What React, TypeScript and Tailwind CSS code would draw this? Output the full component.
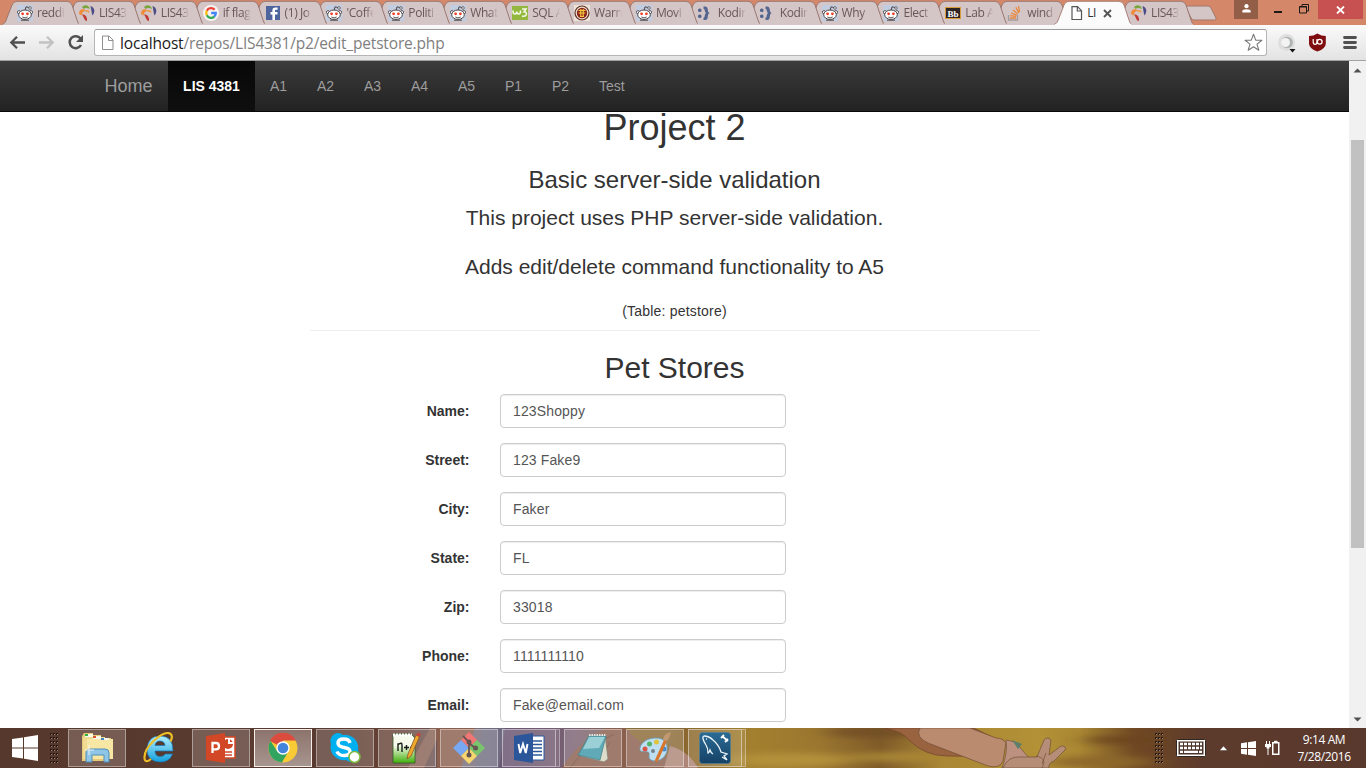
import React from "react";

type IconName =
  | "reddit" | "lis" | "google" | "facebook" | "w3" | "warn" | "koding" | "bb" | "so" | "doc";

const tabs: { icon: IconName; text: string; active?: boolean }[] = [
  { icon: "reddit", text: "reddi" },
  { icon: "lis", text: "LIS43" },
  { icon: "lis", text: "LIS43" },
  { icon: "google", text: "if flag" },
  { icon: "facebook", text: "(1) Jo" },
  { icon: "reddit", text: "'Coffe" },
  { icon: "reddit", text: "Politi" },
  { icon: "reddit", text: "What" },
  { icon: "w3", text: "SQL A" },
  { icon: "warn", text: "Warn" },
  { icon: "reddit", text: "Movi" },
  { icon: "koding", text: "Kodin" },
  { icon: "koding", text: "Kodin" },
  { icon: "reddit", text: "Why" },
  { icon: "reddit", text: "Elect" },
  { icon: "bb", text: "Lab A" },
  { icon: "so", text: "wind" },
  { icon: "doc", text: "LI", active: true },
  { icon: "lis", text: "LIS43" },
];

function Favicon({ name }: { name: IconName }) {
  const art: Record<IconName, React.ReactNode> = {
    reddit: (
      <>
        <rect width="16" height="16" fill="#c3cde2" />
        <path d="M8 6 9 1.8l3.4.8" fill="none" stroke="#4d4646" strokeWidth="1" />
        <circle cx="13" cy="3" r="1.3" fill="#fff" stroke="#4d4646" strokeWidth=".8" />
        <circle cx="2" cy="7.2" r="1.6" fill="#fff" stroke="#4d4646" strokeWidth=".9" />
        <circle cx="14" cy="7.2" r="1.6" fill="#fff" stroke="#4d4646" strokeWidth=".9" />
        <ellipse cx="8" cy="9.7" rx="6.3" ry="4.7" fill="#fff" stroke="#4d4646" strokeWidth="1" />
        <circle cx="5.6" cy="8.8" r="1.4" fill="#f03c24" />
        <circle cx="10.4" cy="8.8" r="1.4" fill="#f03c24" />
        <path d="M5.3 12q2.7 1.7 5.4 0" fill="none" stroke="#4d4646" strokeWidth=".9" />
        <path d="M4 15.2h8" stroke="#4d4646" />
      </>
    ),
    lis: (
      <>
        <path d="M0 9C0 4.500 3 3 7 5.500 4 6 3 8 2.500 10.500Z" fill="#f08b3a" />
        <path d="M3 2C6-.8 10 0 11 4 8 2.500 6 3 4.500 4Z" fill="#7aa63f" />
        <path d="M11.500 1C15 2 17 6 13.500 10.500 12.500 8 12.500 5 11.500 1Z" fill="#4a4c86" />
        <path d="M3 9.500C6 9 8.500 11.500 8 16 5 15.500 5 12 3 9.500Z" fill="#c23b34" />
        <path d="M7 5C10 4.500 11 6 10 8 9 7 8 6.500 6 7Z" fill="#ef9d4c" />
      </>
    ),
    google: (
      <>
        <circle cx="8" cy="8" r="8" fill="#f7f2f2" />
        <g fill="none" strokeWidth="2.3">
          <path d="M11.600 4.700A4.800 4.800 0 0 0 3.800 5.700" stroke="#ea4335" />
          <path d="M3.800 5.700a4.800 4.800 0 0 0 0 4.600" stroke="#fbbc05" />
          <path d="M3.800 10.300a4.800 4.800 0 0 0 7.500 1.300" stroke="#34a853" />
          <path d="M11.300 11.600A4.800 4.800 0 0 0 12.800 8H8.200" stroke="#4285f4" />
        </g>
      </>
    ),
    facebook: (
      <>
        <rect x="1" y="1" width="14" height="14" fill="#4d649c" />
        <path d="M10 15V9.500h2.500V7H10V5.500Q10 4.700 11 4.700h1.600V2.400h-2.200Q7.400 2.400 7.400 5.200V7H5.500v2.500h1.900V15Z" fill="#fff" />
      </>
    ),
    w3: (
      <>
        <rect y="1" width="16" height="14" fill="#94b83e" />
        <path d="M1 5.500q0 3.500 1.900 3.500t1.900-2.500q0 2.500 1.900 2.500t1.900-3.500M10 4h4L12 6.800q2.800 0 2.300 2.700-1 2.500-4.300 1.500" fill="none" stroke="#f4f8e6" strokeWidth="1.600" />
      </>
    ),
    warn: (
      <>
        <rect width="16" height="16" fill="#eee3da" />
        <circle cx="8" cy="8" r="7" fill="#f0e2c8" stroke="#5c3029" strokeWidth="1.200" />
        <circle cx="8" cy="8" r="5.200" fill="#8b1f1c" />
        <path d="M4.500 5.500h7M4.500 8h7M6.800 4v7.500M9.200 4v7.500M6 11.500h4" stroke="#f2cb3d" strokeWidth="1.200" />
      </>
    ),
    koding: (
      <g fill="#54658f">
        <rect x="0" y="3.500" width="3.500" height="3.500" rx="1.500" />
        <rect x="0" y="9.500" width="3.500" height="3.500" rx="1.500" />
        <path d="M5.500 1.500H7q2.800 0 2.800 3.500 0 2.500 1.700 3-1.700.7-1.700 3.500 0 3.500-2.800 3.500H5.500v-2.300q1.200 0 1.200-1.800Q6.700 9 8 8 6.700 7 6.700 5.300q0-1.500-1.200-1.500Z" />
      </g>
    ),
    bb: (
      <>
        <rect x=".5" y="2.500" width="15" height="11" fill="#2e2424" stroke="#d89b3a" />
        <text x="8" y="11.500" textAnchor="middle" fill="#fff" fontFamily="Liberation Serif, serif" fontWeight="700" fontSize="9">Bb</text>
      </>
    ),
    so: (
      <>
        <path d="M1.500 10v5h9v-5" fill="none" stroke="#a39c9c" strokeWidth="1.300" />
        <path d="M3 13h6M3.200 10.700l6 .7M4 8l5.700 2.200M6 5l4.800 4M8.800 2.400l3.200 5.400M11.500 1l1 6" stroke="#e8883d" strokeWidth="1.300" />
      </>
    ),
    doc: (
      <path d="M3 1.700h5.500l4 4V14.500H3ZM8.300 2v4h4" fill="#fff" stroke="#55565a" strokeWidth="1.200" />
    ),
  };
  return <svg className="relative h-4 w-4 shrink-0" viewBox="0 0 16 16">{art[name]}</svg>;
}

function BrowserTab({ icon, text, active, order }: { icon: IconName; text: string; active?: boolean; order: number }) {
  return (
    <div className="relative flex h-[25px] w-[61.900px] shrink-0 items-start pt-[5px] pl-[15px]" style={{ zIndex: order }}>
      <svg className="absolute top-0 left-0 h-[25px] w-[77px]" viewBox="0 0 77 25">
        <path
          d="M-2 24.500C2 24.500 3 23 4.200 20L10 5Q11.500 1.300 15 1.300H65Q68.500 1.300 70 5L75 20Q76 24 78 24.500V26H-2Z"
          fill={active ? "#fbfbfb" : "#d4c5c6"}
          stroke={active ? "#a98379" : "#9a7871"}
        />
        {active ? <path d="M1 24h75v2H1Z" fill="#fbfbfb" /> : null}
      </svg>
      <Favicon name={icon} />
      <span
        className={
          active
            ? "relative ml-[2px] w-[9px] text-xs leading-4 tracking-[-0.500px] whitespace-nowrap text-[#343434]"
            : "relative ml-1 w-[28px] shrink-0 overflow-hidden mask-r-from-70% text-xs leading-4 tracking-[-0.400px] whitespace-nowrap text-[#6a5857]"
        }
      >
        {text}
      </span>
      {active ? (
        <svg className="relative mt-1 ml-[7px] h-[9px] w-[9px] shrink-0" viewBox="0 0 9 9">
          <path d="m1 1 7 7M8 1 1 8" stroke="#555" strokeWidth="1.900" />
        </svg>
      ) : null}
    </div>
  );
}

function TabStrip() {
  return (
    <div className="flex h-[25px] bg-[#d58769]">
      <div className="relative isolate flex w-[1184px] shrink-0 pl-[2px]">
        {tabs.map((t, i) => (
          <BrowserTab key={i} {...t} order={t.active ? 50 : 30 - i} />
        ))}
      </div>
      <svg className="h-[25px] w-[50px] shrink-0" viewBox="0 0 50 25">
        <path d="M3 6H24Q26 6 27 8l5 10q.8 2-1.500 2H10Q8 20 7 18L2.200 8Q1.500 6 3 6Z" fill="#d4c5c6" stroke="#a5776a" />
      </svg>
      <div className="flex h-[19px] w-6 shrink-0 justify-center bg-[#935e48] pt-1">
        <svg className="h-[9px] w-[9px]" viewBox="0 0 9 9">
          <circle cx="4.500" cy="2.200" r="2.100" fill="#fff" />
          <path d="M.3 8.500V7Q.5 5.300 4.500 5.300T8.700 7v1.500Z" fill="#fff" />
        </svg>
      </div>
      <svg className="ml-4 h-[19px] w-[44px] shrink-0" viewBox="0 0 44 19">
        <path d="M0 12h8" stroke="#1f1a18" strokeWidth="2" />
        <path d="M25.500 6.500h7v6.500h-7ZM28 6V4.500h6.500V11H33" fill="none" stroke="#1f1a18" />
        <path d="M25 7h8" stroke="#1f1a18" />
      </svg>
      <div className="flex h-[19px] w-[45px] shrink-0 items-center justify-center bg-[#c75050]">
        <svg className="h-2 w-[9px]" viewBox="0 0 9 8">
          <path d="m1 .5 7 7M8 .5l-7 7" stroke="#fff" strokeWidth="1.800" />
        </svg>
      </div>
    </div>
  );
}

function Toolbar() {
  return (
    <div className="flex h-9 items-center border-b border-[#a0a3a0] bg-linear-to-b from-[#fafafa] to-[#e3e3e3]">
      <svg className="h-[35px] w-[94px] shrink-0" viewBox="0 0 94 35">
        <path d="M25 17.500H12M17 11.800l-5.700 5.700 5.700 5.700" fill="none" stroke="#505050" strokeWidth="2.300" />
        <path d="M39 17.500h13M47 11.800l5.700 5.700-5.700 5.700" fill="none" stroke="#c2c2c2" strokeWidth="2.300" />
        <path d="M80.500 13.500A6 6 0 1 0 81 20" fill="none" stroke="#505050" strokeWidth="2.500" />
        <path d="M83 10v7h-7Z" fill="#505050" />
      </svg>
      <div className="flex h-[27px] w-[1173px] shrink-0 items-center rounded-[3px] border border-[#b5b5b5] border-t-[#9b9b9b] bg-white">
        <svg className="ml-[5px] h-4 w-4 shrink-0" viewBox="0 0 16 16">
          <path d="M2.500 1H9l4 4v9.500H2.500ZM8.500 1v4.500H13" fill="#fff" stroke="#8e8e8e" />
        </svg>
        <span className="ml-1 grow text-[15.500px] leading-5 tracking-[-0.160px] whitespace-nowrap text-[#808080]">
          <span className="text-[#1a1a1a]">localhost</span>/repos/LIS4381/p2/edit_petstore.php
        </span>
        <svg className="mr-[3px] h-[19px] w-[19px]" viewBox="0 0 19 19">
          <path d="m9.500 1.200 2.200 5.900 6.200.2-4.900 3.800 1.800 6.100-5.300-3.500-5.300 3.500L6 11.100 1.100 7.300l6.200-.2Z" fill="#fff" stroke="#777" strokeWidth="1.100" strokeLinejoin="round" />
        </svg>
      </div>
      <svg className="h-[35px] w-[99px] shrink-0" viewBox="0 0 99 35">
        <circle cx="19.500" cy="17.500" r="8.500" fill="#dedede" />
        <circle cx="20" cy="17.500" r="5.800" fill="#adb3b0" />
        <circle cx="18.500" cy="17.500" r="4.500" fill="#f3f3f3" />
        <path d="M22.500 24h6l-3 3.500Z" fill="#111" />
        <path d="M50.400 8.500q-4 2.600-8.400 2.600v7.400q0 5 8.400 8 8.400-3 8.400-8v-7.400Q54.400 11.100 50.400 8.500Z" fill="#800d0d" />
        <path d="M46.200 14v3q0 2.300 1.900 2.300t1.900-2.300v-3" fill="none" stroke="#fff" strokeWidth="1.200" />
        <circle cx="52.700" cy="16.700" r="2.400" fill="none" stroke="#fff" strokeWidth="1.300" />
        <path d="M77.500 12.500h11M77.500 17.500h11M77.500 22.500h11" stroke="#505050" strokeWidth="2.800" strokeLinecap="round" />
      </svg>
    </div>
  );
}

const links = ["A1", "A2", "A3", "A4", "A5", "P1", "P2", "Test"];

const fields = [
  ["Name:", "123Shoppy"],
  ["Street:", "123 Fake9"],
  ["City:", "Faker"],
  ["State:", "FL"],
  ["Zip:", "33018"],
  ["Phone:", "1111111110"],
  ["Email:", "Fake@email.com"],
];

function Page() {
  return (
    <main className="h-[667px] w-[1349px] shrink-0 overflow-hidden bg-white font-['Liberation_Sans',Arial,sans-serif] text-sm leading-5 text-[#333]">
      <nav className="flex h-[51px] border-b border-[#080808] bg-linear-to-b from-[#3c3c3c] to-[#222] pl-[90px] text-[#9d9d9d]">
        <div className="w-[78px] shrink-0 pt-[15px] pl-[14.500px] text-lg leading-5">Home</div>
        <div className="w-[87px] shrink-0 bg-linear-to-b from-[#080808] to-[#0f0f0f] pt-[15px] text-center font-bold text-white">
          LIS 4381
        </div>
        {links.map((l) => (
          <div key={l} className="shrink-0 px-[14.950px] pt-[15px]">{l}</div>
        ))}
      </nav>
      <div className="flex flex-col items-center">
        <h1 className="mt-[-4px] text-4xl leading-10">Project 2</h1>
        <h3 className="mt-[19px] text-2xl leading-[26px]">Basic server-side validation</h3>
        <p className="mt-[10px] text-[21px] leading-[30px]">This project uses PHP server-side validation.</p>
        <p className="mt-[19px] text-[21px] leading-[30px]">Adds edit/delete command functionality to A5</p>
        <p className="mt-[19px] tracking-[0.200px]">(Table: petstore)</p>
        <hr className="mt-[9px] w-[730px] border-[#eee]" />
        <h2 className="mt-5 text-3xl leading-[33px]">Pet Stores</h2>
      </div>
      <form className="mt-[10px] flex flex-col gap-[15px]">
        {fields.map(([label, value]) => (
          <div key={label} className="flex h-[34px] items-center">
            <label className="w-[469.500px] text-right font-bold">{label}</label>
            <input
              readOnly
              value={value}
              aria-label={label}
              className="ml-[30.500px] h-[34px] w-[286px] rounded-[4px] border border-[#ccc] bg-white px-3 py-[6px] tracking-[0.130px] text-[#555] shadow-[inset_0_1px_1px_rgba(0,0,0,0.075)] outline-none"
            />
          </div>
        ))}
      </form>
    </main>
  );
}

function Scrollbar() {
  return (
    <div className="flex w-[17px] flex-col items-center bg-[#f1f1f1]">
      <svg className="mt-[7px] h-[5px] w-[9px]" viewBox="0 0 9 5"><path d="m4.500.5 4 4h-8Z" fill="#505050" /></svg>
      <div className="mt-[67px] h-[408px] w-[13px] bg-[#c1c1c1]" />
      <div className="grow" />
      <svg className="mb-[6px] h-[5px] w-[9px]" viewBox="0 0 9 5"><path d="m4.500 4.500-4-4h8Z" fill="#505050" /></svg>
    </div>
  );
}

function Wallpaper() {
  return (
    <svg className="absolute inset-0 h-10 w-full" viewBox="0 0 1366 40" preserveAspectRatio="none">
      <defs>
        <linearGradient id="wall">
          <stop offset="0" stopColor="#57382c" />
          <stop offset=".25" stopColor="#593b31" />
          <stop offset=".29" stopColor="#6a4436" />
          <stop offset=".34" stopColor="#6d5d68" />
          <stop offset=".37" stopColor="#6a5673" />
          <stop offset=".42" stopColor="#7a6172" />
          <stop offset=".5" stopColor="#8a672f" />
          <stop offset=".55" stopColor="#a3802f" />
          <stop offset=".6" stopColor="#9b7630" />
          <stop offset=".645" stopColor="#7f5b29" />
          <stop offset=".69" stopColor="#aa8835" />
          <stop offset=".76" stopColor="#b39136" />
          <stop offset=".79" stopColor="#aa8834" />
          <stop offset=".83" stopColor="#714924" />
          <stop offset=".88" stopColor="#5d3b2c" />
          <stop offset="1" stopColor="#59382d" />
        </linearGradient>
        <filter id="soft" x="-30%" y="-80%" width="160%" height="260%"><feGaussianBlur stdDeviation="14 3" /></filter>
      </defs>
      <rect width="1366" height="40" fill="url(#wall)" />
      <g filter="url(#soft)">
        <ellipse cx="790" cy="32" rx="60" ry="7" fill="#b3913b" />
        <ellipse cx="875" cy="4" rx="48" ry="6" fill="#735025" />
        <ellipse cx="905" cy="29" rx="60" ry="5" fill="#a98634" />
        <ellipse cx="1120" cy="12" rx="35" ry="4" fill="#6b451f" />
        <ellipse cx="1100" cy="34" rx="52" ry="6" fill="#8d6829" />
      </g>
      <path d="M408 40 430 0h12L424 40Z" fill="#906756" opacity=".8" />
      <path d="M437 0h45l-7 40h-38Z" fill="#8a5f4d" />
      <path d="M475 0h30l-6 40h-38Z" fill="#727083" opacity=".8" />
      <path d="M562 40q15-25 44-40h25l13 16 40 24Z" fill="#8a5f4e" />
      <path d="M625 0h55l-16 25q-20-5-39-25Z" fill="#8a6a36" />
      <path d="M570 40q12-18 44-34M610 14q-8 12-6 20" fill="none" stroke="#5f4033" opacity=".6" />
      <path d="M670 18q18 4 28 22h-34Z" fill="#ae8677" />
      <path d="M884 0q18 3 25 12 16 16 38 16l33 .5 17-17L974 0Z" fill="#99633f" stroke="#74442d" strokeWidth=".7" />
      <path d="M920 0q-5 9 8 15l60 23q12 3 15-5l3-18q-3-5-10-5L970 0Z" fill="#bb8b70" stroke="#704d36" strokeWidth=".7" />
      <path d="m1006 12 9 2 15 17-2 9h-26q6-15 4-28Z" fill="#bd9180" stroke="#755441" strokeWidth=".7" />
      <path d="m1012 12 10 4-4 5Z" fill="#5e7e6c" />
      <path d="M1003 40q5-12 17-11l17 0 7-17q3-4 7 0l-2 15 12-9q6 0 4 4l-11 11q-6 2-5 7Z" fill="#b68e77" stroke="#705036" strokeWidth=".7" />
      <path d="M1036 28q12 2 6 12M1046 25l-4 11" fill="none" stroke="#705036" strokeWidth=".7" />
    </svg>
  );
}

function Grip() {
  return (
    <svg className="h-10 w-[9px] shrink-0" viewBox="0 0 9 40">
      {[5, 9, 13, 17, 21, 25, 29, 33].map((y) =>
        [0, 3, 6].map((x) => (
          <g key={`${x}-${y}`}>
            <rect x={x} y={y} width="2" height="2" fill="#241813" />
            <rect x={x + 1} y={y + 1} width="1" height="1" fill="#9b8378" />
          </g>
        ))
      )}
    </svg>
  );
}

function TaskButton({ children, kind = "open" }: { children: React.ReactNode; kind?: "plain" | "open" | "active" | "stack" }) {
  if (kind === "plain") return <div className="flex h-[38px] w-[58px] shrink-0 items-center justify-center">{children}</div>;
  if (kind === "active")
    return <div className="flex h-[38px] w-[58px] shrink-0 items-center justify-center border border-[#f5efeb] bg-linear-to-b from-[#8c746c] to-[#a8958f]">{children}</div>;
  if (kind === "stack")
    return (
      <div className="flex h-[38px] w-[58px] shrink-0">
        <div className="flex w-[54px] items-center justify-center border border-white/45 bg-white/15">{children}</div>
        <div className="grow border border-l-0 border-white/35 bg-white/10" />
      </div>
    );
  return <div className="flex h-[38px] w-[58px] shrink-0 items-center justify-center border border-white/40 bg-white/18">{children}</div>;
}

const art = "h-8 w-8 shrink-0";

function TaskIcons() {
  return (
    <div className="flex gap-1">
      <TaskButton>
        <svg className={art} viewBox="0 0 32 32">
          <path d="M1 4V29h27V10h2V6H20V3H12V1H3Z" fill="#e6ca78" />
          <path d="M2 5h22v22H2Z" fill="#f1db91" />
          <path d="M6 7h26v20H6Z" fill="#f7e6a4" />
          <path d="M4 2h8v3H4Z" fill="#faf8e9" /><path d="M4 2h3v2H4Z" fill="#33af43" />
          <path d="M12 4h8v3h-8Z" fill="#faf8e9" /><path d="M12 4h3v2h-3Z" fill="#d85131" />
          <path d="M20 6h8v2h-8Z" fill="#faf8e9" /><path d="M20 6h3v2h-3Z" fill="#4386c9" />
          <path d="M5 30V21q0-4 5-4h14q4 0 4 4v9h-5v-7H11v7Z" fill="#8fc5e7" stroke="#4e8fba" />
          <path d="M8 13v10M4 18h9" stroke="#fff" opacity=".8" />
        </svg>
      </TaskButton>
      <TaskButton kind="plain">
        <svg className={art} viewBox="0 0 32 32">
          <defs><linearGradient id="ie" x1="0" x2="0" y1="0" y2="1"><stop stopColor="#b1efff" /><stop offset="1" stopColor="#139fdc" /></linearGradient></defs>
          <path fillRule="evenodd" d="M30 19H12q0 5.500 5.500 5.500 3.500 0 4.500-2.500h7.500q-3 8-12 8Q4 29.500 4 17 5 4 17 4q13 0 13 15ZM12 13.500h10q-.5-4.500-5-4.500t-5 4.500Z" fill="url(#ie)" stroke="#1779b7" strokeWidth=".7" />
          <path d="M8 27Q2 32 1.500 26 1 18 11 8.500 22-1 27 1.500q3.500 2 .5 8" fill="none" stroke="#edbd27" strokeWidth="2.200" />
        </svg>
      </TaskButton>
      <TaskButton>
        <svg className={art} viewBox="0 0 32 32">
          <path d="M18 5h12v21H18Z" fill="#fff" stroke="#d24726" strokeWidth="1.500" />
          <circle cx="23" cy="12" r="5" fill="#d24726" /><path d="M24 6v5h5" fill="none" stroke="#fff" strokeWidth="2" />
          <path d="M19 20h8M19 23h8" stroke="#d24726" strokeWidth="1.500" />
          <path d="M1 4 20 1v30L1 28Z" fill="#d24726" />
          <path d="M7.500 21V11h3.500q3 0 3 3.200T11 17.400H8" fill="none" stroke="#fff" strokeWidth="2.300" />
        </svg>
      </TaskButton>
      <TaskButton kind="active">
        <svg className={art} viewBox="0 0 32 32">
          <circle cx="16" cy="16" r="14.500" fill="#f8ca36" />
          <path d="M16 16 3 9a14.500 14.500 0 0 1 26-.5H16Z" fill="#db4b3e" />
          <path d="M3.400 8.800a14.500 14.500 0 0 0 11.500 21.700L21 20l-5-4-6 3Z" fill="#31a45f" />
          <circle cx="16" cy="16" r="6.700" fill="#fff" /><circle cx="16" cy="16" r="5.300" fill="#4285db" />
        </svg>
      </TaskButton>
      <TaskButton>
        <svg className={art} viewBox="0 0 32 32">
          <path d="M9 1a8 8 0 0 0-7 11 13 13 0 0 0 15 16 8 8 0 0 0 12-10A13 13 0 0 0 14 3 8 8 0 0 0 9 1Z" fill="#00aff0" />
          <path d="M21 11q-1-4-6-4-6 0-6 4 0 3.500 6 4.500t6 4q0 4-6 4-5.500 0-7-4" fill="none" stroke="#fff" strokeWidth="3.500" />
          <circle cx="25.500" cy="25" r="5.500" fill="#fff" stroke="#7ab83e" strokeWidth="1.500" />
        </svg>
      </TaskButton>
      <TaskButton>
        <svg className={art} viewBox="0 0 32 32">
          <defs><linearGradient id="np" x1="0" x2="0" y1="0" y2="1"><stop offset=".4" stopColor="#f5faeb" /><stop offset=".95" stopColor="#4fb51c" /></linearGradient></defs>
          <path d="M2 2h18l4 4v25H2Z" fill="url(#np)" stroke="#2f5a2a" strokeWidth=".8" />
          <path d="M2 3h19" stroke="#fff" strokeWidth="3" strokeDasharray="2 1" />
          <path d="M7 19v-7h1q3-2 3 1v7M13 15.500h5M15.500 13v5M19 15.500h4M21 13v5" fill="none" stroke="#161b15" strokeWidth="1.400" />
          <path d="m17 22 8-19 3.500 1.700L20 24l-4 3Z" fill="#efaa2e" stroke="#8b5629" strokeWidth=".8" /><path d="m25 3 2-2.500 3 1.500-1.500 3Z" fill="#c8453f" />
        </svg>
      </TaskButton>
      <TaskButton>
        <svg className={art} viewBox="0 0 32 32">
          <path d="m16 0 8 8-8 8-8-8Z" fill="#f17775" /><path d="m8 8 8 8-8 8-8-8Z" fill="#77a8f1" />
          <path d="m24 8 8 8-8 8-8-8Z" fill="#79c56c" /><path d="m16 16 8 8-8 8-8-8Z" fill="#f6d66e" />
          <path d="m10 4 6 6v14M16 11l6 5" fill="none" stroke="#655554" strokeWidth="1.800" />
          <circle cx="16" cy="10" r="2.500" fill="#655554" /><circle cx="16" cy="23" r="2.500" fill="#655554" /><circle cx="22.500" cy="16" r="2.500" fill="#655554" />
        </svg>
      </TaskButton>
      <TaskButton kind="stack">
        <svg className={art} viewBox="0 0 32 32">
          <path d="M17 4h14v24H17Z" fill="#fff" stroke="#2b579a" />
          <path d="M19 9h10M19 12.500h10M19 16h10M19 19.500h10M19 23h10" stroke="#2b579a" strokeWidth="1.500" />
          <path d="M1 4 20 1v30L1 28Z" fill="#2b579a" />
          <path d="m5.500 12 1.700 9 2.800-9 2.800 9 1.700-9" fill="none" stroke="#fff" strokeWidth="1.900" />
        </svg>
      </TaskButton>
      <TaskButton>
        <svg className={art} viewBox="0 0 32 32">
          <path d="M12 3h16l3 24-4 3L3 24Z" fill="#dedccb" stroke="#817d70" strokeWidth=".7" />
          <path d="M12 4h17l-6 24-22-5Z" fill="#5faab6" stroke="#427e86" strokeWidth=".7" />
          <path d="M12 5h16l-6 11-16 1Z" fill="#b5e0e4" opacity=".7" />
          <path d="M12 3h17" stroke="#e5e5e5" strokeWidth="2" strokeDasharray="1.500 1" />
        </svg>
      </TaskButton>
      <TaskButton>
        <svg className={art} viewBox="0 0 32 32">
          <path d="M17 6c8 0 12 5 11 13-2 8-10 12-16 9-4-2 0-7-3-8-4-1-9 1-8-4 1-6 8-10 16-10Z" fill="#bddff1" stroke="#6a9eb9" strokeWidth=".8" />
          <circle cx="6" cy="17" r="2.500" fill="#d75642" /><circle cx="10.500" cy="12" r="2.500" fill="#53b36b" />
          <circle cx="17.500" cy="10" r="2.500" fill="#e0c43c" /><circle cx="25" cy="17" r="2.500" fill="#4b8bce" /><circle cx="14" cy="19" r="2" fill="#75848c" />
          <path d="m15.500 29 3 1L28 9l-3-1Z" fill="#d8752b" /><path d="M24 8q0-6 8-8-1 5-4 9Z" fill="#c29972" />
        </svg>
      </TaskButton>
      <TaskButton kind="stack">
        <svg className={art} viewBox="0 0 32 32">
          <defs><linearGradient id="sql" x1="0" x2="0" y1="0" y2="1"><stop stopColor="#2b6b95" /><stop offset="1" stopColor="#164166" /></linearGradient></defs>
          <rect x=".5" y=".5" width="31" height="31" rx="3" fill="url(#sql)" stroke="#4b83a0" strokeWidth=".6" />
          <path d="M14 22q-2-1-3-4-1 3-2 3 0-5-2-8Q2 5 5 4q5 0 9 4 6 5 8 12l6 2-3 2 3 4-5-3M7 7h1" fill="none" stroke="#ecf5fa" strokeWidth="1.300" />
          <path d="m23 4 6 5M22 6l3-3M26 10l3-3" stroke="#fff" strokeWidth="1.800" />
        </svg>
      </TaskButton>
    </div>
  );
}

function Taskbar() {
  return (
    <footer className="relative h-10 overflow-hidden bg-[#57382c]">
      <Wallpaper />
      <div className="relative flex h-10 items-center">
        <svg className="ml-3 h-[26px] w-[26px] shrink-0" viewBox="0 0 26 26">
          <path d="m0 4 11-1.600v10H0ZM12 2.200 26 0v12.400H12ZM0 13.500h11v10L0 22ZM12 13.500h14V26l-14-2.300Z" fill="#fff" />
        </svg>
        <div className="ml-3 flex shrink-0"><Grip /></div>
        <div className="ml-[9px] shrink-0"><TaskIcons /></div>
        <div className="grow" />
        <Grip />
        <svg className="ml-[12px] h-[18px] w-[30px] shrink-0" viewBox="0 0 30 18">
          <rect x=".5" y=".5" width="29" height="17" rx="1" fill="#fff" stroke="#302620" />
          <rect x="2.500" y="2.500" width="25" height="13" fill="#4c342b" />
          <path d="M4 5h22M4 9h22" stroke="#fff" strokeWidth="2.500" strokeDasharray="3 1" />
          <path d="M4 12.900h3M8 12.900h14M23 12.900h3" stroke="#fff" strokeWidth="2.300" />
        </svg>
        <svg className="ml-[13px] h-[7px] w-[9px] shrink-0" viewBox="0 0 9 7"><path d="m4.500 1 4 4.500h-8Z" fill="#fff" stroke="#302620" strokeWidth=".4" /></svg>
        <svg className="ml-[13px] h-[15px] w-[15px] shrink-0" viewBox="0 0 15 15">
          <path d="m0 2.200 6-.9v5.700H0ZM7 1.200 15 0v7H7ZM0 8h6v5.700l-6-.9ZM7 8h8v7l-8-1.200Z" fill="#fff" />
        </svg>
        <svg className="ml-[9px] h-4 w-4 shrink-0" viewBox="0 0 16 16">
          <path d="M1 1h1v3h2V1h1v3h1v3H4.500v1.500H3.500V15h-1V8.500H1.500V7H0V4h1Z" fill="#fff" />
          <path d="M7.750 2.750h6v11.500h-6Z" fill="none" stroke="#fff" strokeWidth="1.500" />
          <path d="M9 .8h3.500v1.500H9Z" fill="#fff" />
        </svg>
        <div className="mr-[10px] ml-3 w-[63px] shrink-0 text-center text-xs leading-[17px] tracking-[-0.400px] whitespace-nowrap text-white">
          <div className="-ml-px">9:14 AM</div>
          <div className="-ml-px">7/28/2016</div>
        </div>
      </div>
    </footer>
  );
}

export default function App() {
  return (
    <div className="h-[768px] w-[1366px] overflow-hidden bg-white font-['Open_Sans',sans-serif]">
      <TabStrip />
      <Toolbar />
      <div className="flex h-[667px]">
        <Page />
        <Scrollbar />
      </div>
      <Taskbar />
    </div>
  );
}
